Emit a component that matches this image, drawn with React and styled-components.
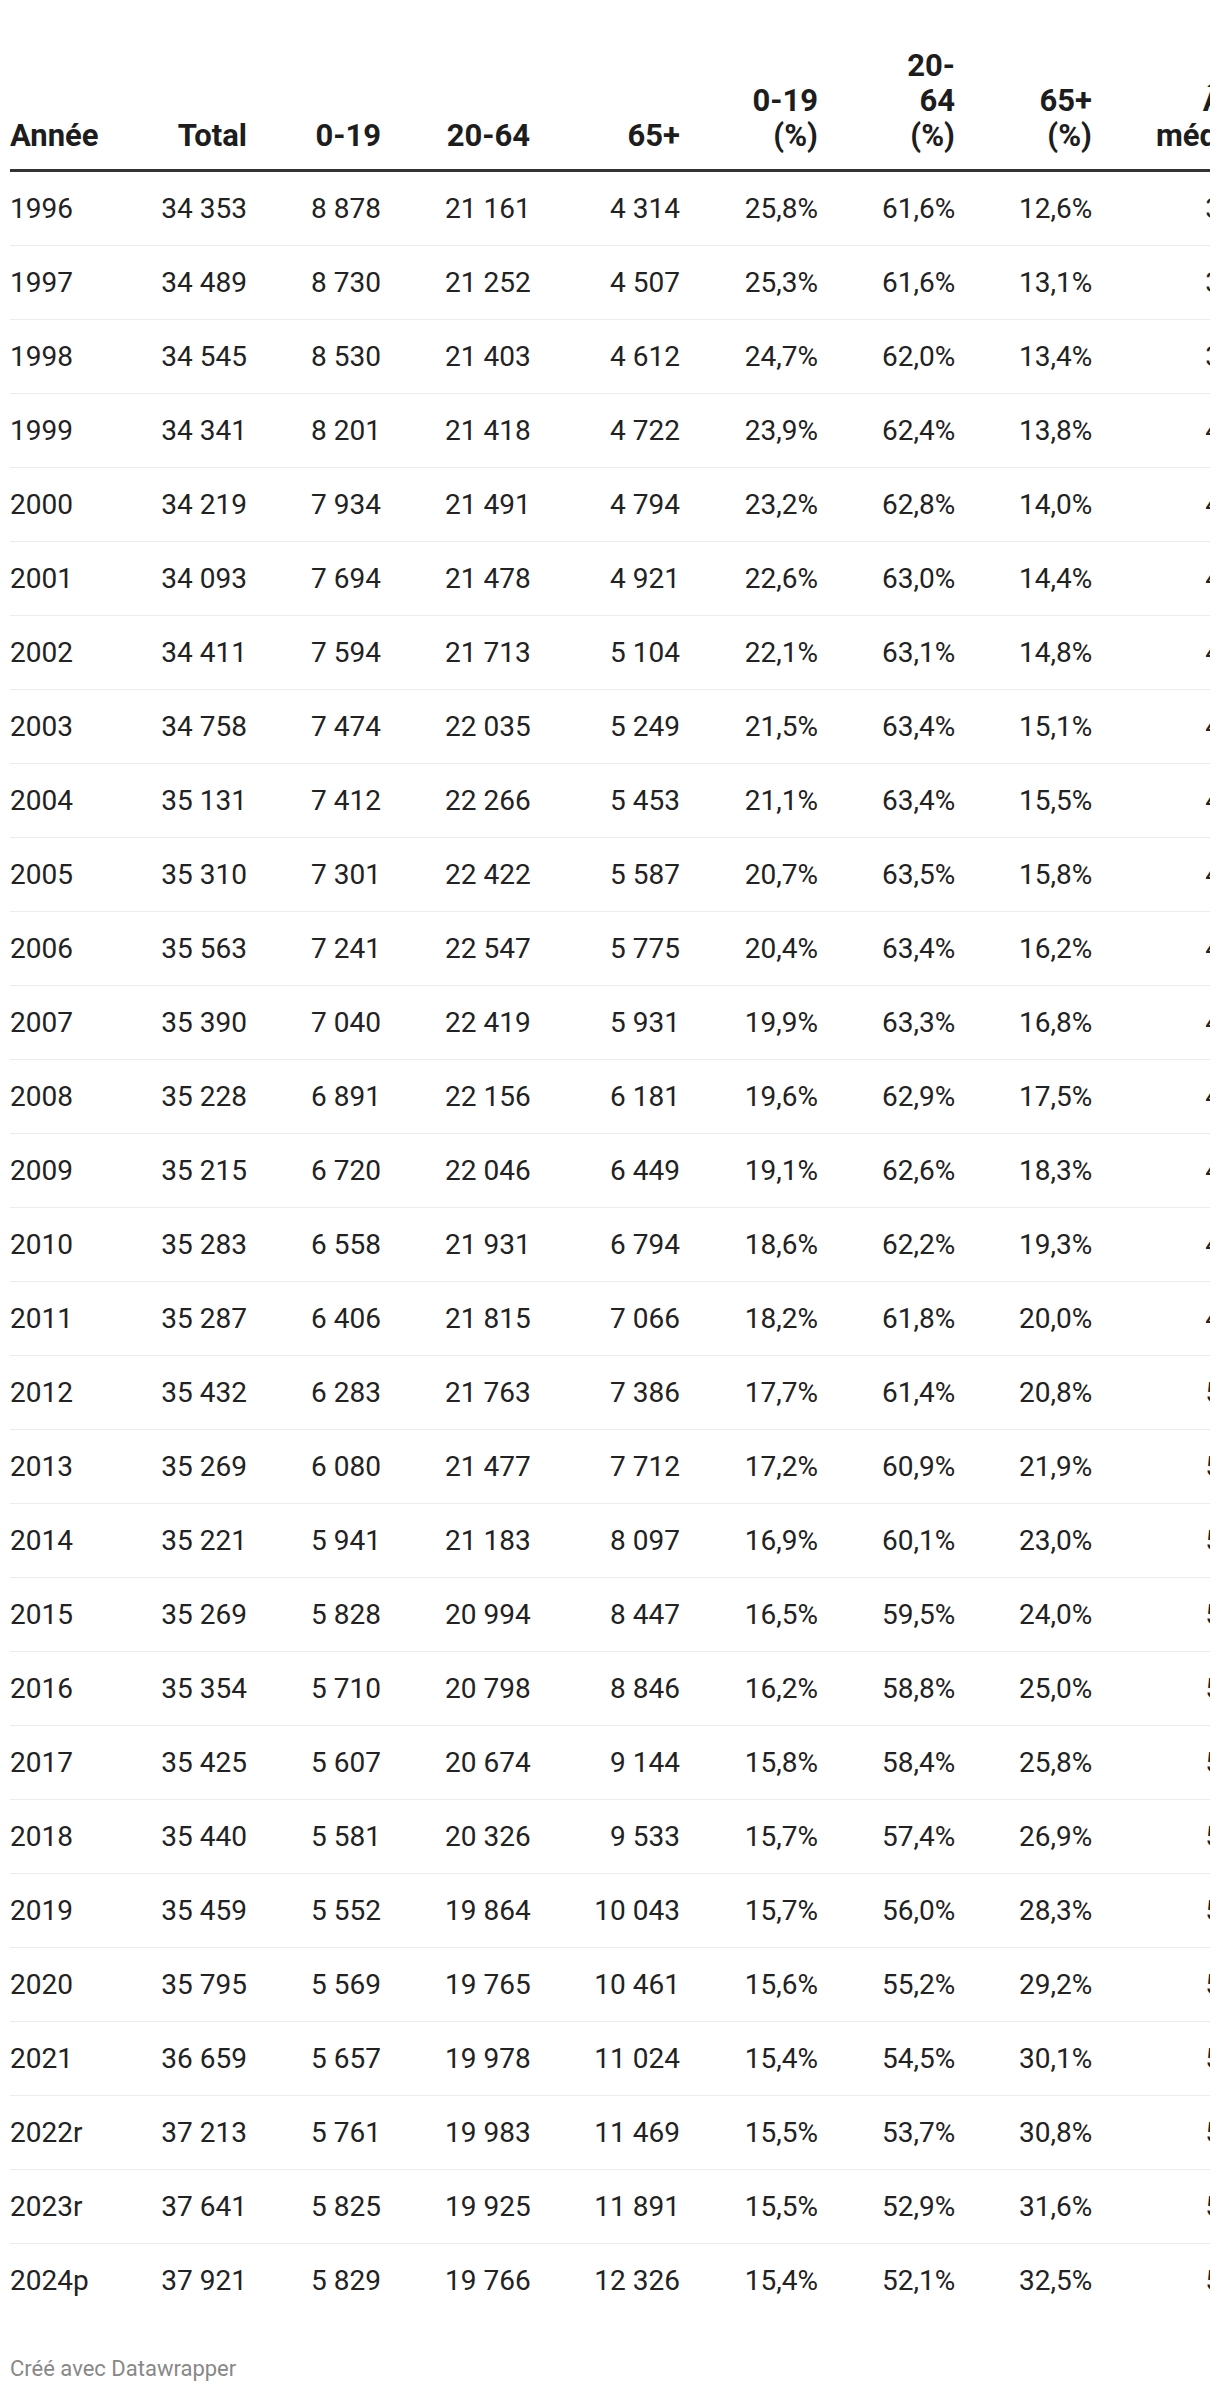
import React from "react";
import styled, { createGlobalStyle } from "styled-components";

const GlobalStyle = createGlobalStyle`
  html, body {
    margin: 0;
    padding: 0;
    background: #ffffff;
  }
  body {
    font-family: Roboto, "Noto Sans", "Liberation Sans", sans-serif;
    color: #222222;
    -webkit-font-smoothing: antialiased;
  }
`;

const COLS = "119px 150px 134px 149px 150px 138px 137px 137px 166px";

const Page = styled.div`
  padding: 48px 10px 0;
  box-sizing: border-box;
  width: 1220px;
`;

const Scroller = styled.div`
  width: 1200px;
  overflow: hidden;
`;

const Table = styled.div`
  display: flex;
  flex-direction: column;
  width: max-content;
`;

const HeadRow = styled.div`
  display: grid;
  grid-template-columns: ${COLS};
  border-bottom: 3px solid #333333;
`;

const Row = styled.div`
  display: grid;
  grid-template-columns: ${COLS};
  border-bottom: ${(p) => (p.$last ? "none" : "1px solid #ececec")};
`;

const HeadCell = styled.div`
  box-sizing: border-box;
  align-self: end;
  padding: 0 32px 16px;
  padding-left: ${(p) => (p.$first ? "0" : "32px")};
  text-align: ${(p) => (p.$first ? "left" : "right")};
  font-size: 31px;
  line-height: 35px;
  font-weight: 700;
  color: #1d1d1d;
`;

const Cell = styled.div`
  box-sizing: border-box;
  padding: 19px 32px;
  padding-left: ${(p) => (p.$first ? "0" : "32px")};
  text-align: ${(p) => (p.$first ? "left" : "right")};
  font-size: 28px;
  line-height: 35px;
  font-weight: 400;
  color: #222222;
  white-space: nowrap;
`;

const Footer = styled.div`
  margin-top: 39px;
  font-size: 22px;
  line-height: 26px;
  color: #888888;
`;

const headers = [
  "Année",
  "Total",
  "0-19",
  "20-64",
  "65+",
  <>0-19 (%)</>,
  <>20-<wbr />64 (%)</>,
  <>65+ (%)</>,
  <>Âge médian</>,
];

const NB = "\u00A0";
const n = (s) => s.replace(" ", NB);

const rows = [
  ["1996", "34 353", "8 878", "21 161", "4 314", "25,8%", "61,6%", "12,6%", "38,9"],
  ["1997", "34 489", "8 730", "21 252", "4 507", "25,3%", "61,6%", "13,1%", "39,3"],
  ["1998", "34 545", "8 530", "21 403", "4 612", "24,7%", "62,0%", "13,4%", "39,8"],
  ["1999", "34 341", "8 201", "21 418", "4 722", "23,9%", "62,4%", "13,8%", "40,3"],
  ["2000", "34 219", "7 934", "21 491", "4 794", "23,2%", "62,8%", "14,0%", "40,8"],
  ["2001", "34 093", "7 694", "21 478", "4 921", "22,6%", "63,0%", "14,4%", "41,3"],
  ["2002", "34 411", "7 594", "21 713", "5 104", "22,1%", "63,1%", "14,8%", "41,9"],
  ["2003", "34 758", "7 474", "22 035", "5 249", "21,5%", "63,4%", "15,1%", "42,5"],
  ["2004", "35 131", "7 412", "22 266", "5 453", "21,1%", "63,4%", "15,5%", "43,1"],
  ["2005", "35 310", "7 301", "22 422", "5 587", "20,7%", "63,5%", "15,8%", "43,8"],
  ["2006", "35 563", "7 241", "22 547", "5 775", "20,4%", "63,4%", "16,2%", "44,5"],
  ["2007", "35 390", "7 040", "22 419", "5 931", "19,9%", "63,3%", "16,8%", "45,3"],
  ["2008", "35 228", "6 891", "22 156", "6 181", "19,6%", "62,9%", "17,5%", "46,2"],
  ["2009", "35 215", "6 720", "22 046", "6 449", "19,1%", "62,6%", "18,3%", "47,1"],
  ["2010", "35 283", "6 558", "21 931", "6 794", "18,6%", "62,2%", "19,3%", "48,0"],
  ["2011", "35 287", "6 406", "21 815", "7 066", "18,2%", "61,8%", "20,0%", "49,0"],
  ["2012", "35 432", "6 283", "21 763", "7 386", "17,7%", "61,4%", "20,8%", "50,0"],
  ["2013", "35 269", "6 080", "21 477", "7 712", "17,2%", "60,9%", "21,9%", "50,9"],
  ["2014", "35 221", "5 941", "21 183", "8 097", "16,9%", "60,1%", "23,0%", "51,7"],
  ["2015", "35 269", "5 828", "20 994", "8 447", "16,5%", "59,5%", "24,0%", "52,4"],
  ["2016", "35 354", "5 710", "20 798", "8 846", "16,2%", "58,8%", "25,0%", "53,0"],
  ["2017", "35 425", "5 607", "20 674", "9 144", "15,8%", "58,4%", "25,8%", "53,5"],
  ["2018", "35 440", "5 581", "20 326", "9 533", "15,7%", "57,4%", "26,9%", "54,0"],
  ["2019", "35 459", "5 552", "19 864", "10 043", "15,7%", "56,0%", "28,3%", "54,4"],
  ["2020", "35 795", "5 569", "19 765", "10 461", "15,6%", "55,2%", "29,2%", "54,8"],
  ["2021", "36 659", "5 657", "19 978", "11 024", "15,4%", "54,5%", "30,1%", "55,1"],
  ["2022r", "37 213", "5 761", "19 983", "11 469", "15,5%", "53,7%", "30,8%", "55,3"],
  ["2023r", "37 641", "5 825", "19 925", "11 891", "15,5%", "52,9%", "31,6%", "55,5"],
  ["2024p", "37 921", "5 829", "19 766", "12 326", "15,4%", "52,1%", "32,5%", "55,7"],
];

export default function App() {
  return (
    <>
      <GlobalStyle />
      <Page>
        <Scroller>
          <Table>
            <HeadRow>
              {headers.map((h, i) => (
                <HeadCell key={i} $first={i === 0}>
                  {h}
                </HeadCell>
              ))}
            </HeadRow>
            {rows.map((r, ri) => (
              <Row key={r[0]} $last={ri === rows.length - 1}>
                {r.map((v, ci) => (
                  <Cell key={ci} $first={ci === 0}>
                    {n(v)}
                  </Cell>
                ))}
              </Row>
            ))}
          </Table>
        </Scroller>
        <Footer>Créé avec Datawrapper</Footer>
      </Page>
    </>
  );
}
